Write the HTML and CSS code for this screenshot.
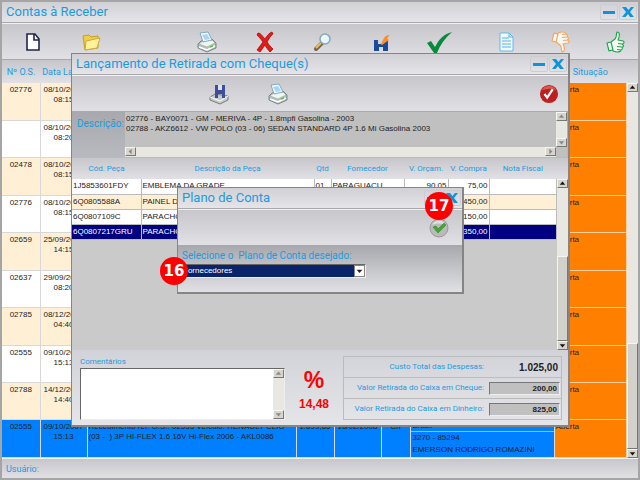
FILE: index.html
```html
<!DOCTYPE html>
<html lang="pt-BR">
<head>
<meta charset="utf-8">
<title>Contas à Receber</title>
<link rel="stylesheet" href="styles.css">
</head>
<body>
<svg class="defs" aria-hidden="true">
  <symbol id="min" viewBox="0 0 16 14"><path d="M2 6h12v3H2z" fill="#0f93dc"/></symbol>
  <symbol id="close" viewBox="0 0 16 14"><path d="M2 2h4l2.500 3L11 2h3l-4 5 4 5h-4L8 9l-2.500 3H2l4-5z" fill="#0f93dc"/></symbol>
  <symbol id="printer" viewBox="0 0 20 22">
    <path d="M1 13 4 10l11-2 4 4v5l-9 4-9-4z" fill="#b4c0c2" stroke="#66736f" stroke-width=".8"/>
    <path d="m2 13 4-3 9-1 3 3-8 4z" fill="#f0f6ee" stroke="#96a29f" stroke-width=".6"/>
    <path d="M3 2 11 1l4 8-9 2z" fill="#eef8ff" stroke="#6c9bb8" stroke-width=".8"/>
    <path d="m5 4 5-1 3 5-5 1z" fill="#a8d5f0"/>
    <path d="m2 16 8 3 8-4" fill="none" stroke="#fff" stroke-width="1.500"/>
    <path d="m13 16 3-1" stroke="#6fb84e" stroke-width="1.500"/>
  </symbol>
  <symbol id="thumb" viewBox="0 0 20 22">
    <path d="M9 8C11 6 10 3 11 1c3 0 3 4 1 8l5 1c2 1 1 3-1 3 2 1 2 3 0 3 1 1 0 3-1 3 0 2-2 2-4 2-3 0-4-1-5-2l-3 1-2-8 4-1zM5 11l2 8M12 12.500l4 .5M11 15.500l5 .5M11 18.500l4 .5" fill="#f4f8f2" stroke="currentColor" stroke-width="1.100" stroke-linejoin="round"/>
  </symbol>
  <symbol id="up" viewBox="0 0 11 9"><path d="M2 6h7L5.500 2z" fill="currentColor"/></symbol>
  <symbol id="down" viewBox="0 0 11 9"><path d="M2 3h7L5.500 7z" fill="currentColor"/></symbol>
</svg>

<main class="window main">
  <header class="titlebar">
    <h1>Contas à Receber</h1>
    <button class="ctl" aria-label="Minimizar"><svg><use href="#min"/></svg></button>
    <button class="ctl" aria-label="Fechar"><svg><use href="#close"/></svg></button>
  </header>
  <nav class="toolbar tools" aria-label="Ferramentas">
    <div class="group">
      <button aria-label="Novo"><svg viewBox="0 0 20 22"><path d="M4 3h8l4 5v11H4z" fill="#fff" stroke="#20264d" stroke-width="1.600"/><path d="M11 3v6h5" fill="none" stroke="#20264d" stroke-width="1.600"/></svg></button>
      <button aria-label="Abrir"><svg viewBox="0 0 20 22"><path d="m2 5 6-1 2 2 7-1v12L4 19z" fill="#f0cf46" stroke="#c49d2d"/><path d="m5 10 14-3-3 10L4 19z" fill="#fff29b" stroke="#d0a936"/></svg></button>
      <span class="slot"></span>
      <button aria-label="Imprimir"><svg><use href="#printer"/></svg></button>
      <button aria-label="Excluir"><svg viewBox="0 0 20 22"><path d="M3 2c3 0 5 4 7 6 2-3 4-6 7-7l1 2c-3 2-4 5-6 8 2 3 4 5 6 7l-3 3c-2-2-4-5-5-7-2 2-3 5-5 7l-3-2c2-3 4-5 6-8C6 8 4 6 2 4z" fill="#e31b18" stroke="#b30808" stroke-width=".8"/></svg></button>
      <button aria-label="Localizar"><svg viewBox="0 0 20 22"><path d="m9 12-6 6" stroke="#6e6652" stroke-width="4" stroke-linecap="round"/><path d="m8 12-5 5" stroke="#eec15b" stroke-width="2"/><circle cx="12" cy="8" r="5" fill="#e4f7ff" stroke="#83a8bf" stroke-width="1.500"/><path d="M9 7c1-2 3-2 5-1" fill="none" stroke="#fff" stroke-width="1.500"/></svg></button>
      <button aria-label="Baixar"><svg viewBox="0 0 20 22"><path d="M3 9h4v4h6V9h4v11h-5v-4H8v4H3z" fill="#174c9c"/><path d="m4 9 6 4 3-6c1-2 3-3 6-3-2 1-2 3-3 4l2 1-7 5z" fill="#ff8d29"/></svg></button>
      <button class="wide" aria-label="Confirmar"><svg viewBox="0 0 28 24"><path d="m2 13 4-2 4 6C14 9 19 4 27 2 20 8 15 15 12 23H9z" fill="#078a3d"/></svg></button>
    </div>
    <div class="group states">
      <button aria-label="Relatório"><svg viewBox="0 0 20 22"><path d="M4 2h9l4 4v14H4z" fill="#f4fbff" stroke="#61b9ec"/><path d="M13 2v4h4M6 7h7M6 10h9M6 13h9M6 16h9" fill="none" stroke="#54b1e6"/></svg></button>
      <button class="reject" aria-label="Reprovar"><svg><use href="#thumb"/></svg></button>
      <button class="approve" aria-label="Aprovar"><svg><use href="#thumb"/></svg></button>
    </div>
  </nav>
  <div class="grid-area">
    <table class="receber">
      <colgroup><col class="r1"><col class="r2"><col class="r3"><col class="r4"><col class="r5"><col class="r6"><col class="r7"><col class="r8"></colgroup>
      <thead><tr><th>Nº O.S.</th><th>Data Lanç.</th><th></th><th></th><th></th><th></th><th></th><th>Situação</th></tr></thead>
      <tbody>
        <tr><td>02776</td><td>08/10/2007<br>08:15</td><td></td><td></td><td></td><td></td><td></td><td>Aberta</td></tr>
        <tr><td></td><td>08/10/2007<br>08:20</td><td></td><td></td><td></td><td></td><td></td><td>Aberta</td></tr>
        <tr><td>02478</td><td>08/10/2007<br>08:15</td><td></td><td></td><td></td><td></td><td></td><td>Aberta</td></tr>
        <tr><td>02776</td><td>08/10/2007<br>08:15</td><td></td><td></td><td></td><td></td><td></td><td>Aberta</td></tr>
        <tr><td>02659</td><td>25/09/2007<br>14:15</td><td></td><td></td><td></td><td></td><td></td><td>Aberta</td></tr>
        <tr><td>02637</td><td>29/09/2007<br>08:20</td><td></td><td></td><td></td><td></td><td></td><td>Aberta</td></tr>
        <tr><td>02785</td><td>08/12/2007<br>04:40</td><td></td><td></td><td></td><td></td><td></td><td>Aberta</td></tr>
        <tr><td>02555</td><td>09/10/2007<br>15:13</td><td></td><td></td><td></td><td></td><td></td><td>Aberta</td></tr>
        <tr><td>02788</td><td>14/12/2007<br>14:40</td><td></td><td></td><td></td><td></td><td></td><td>Aberta</td></tr>
        <tr class="current"><td>02555</td><td>09/10/2007<br>15:13</td><td>Recebimento ref. O.S.: 02555 Veículo: RENAULT CLIO<br>(03 -&nbsp; ) 3P HI-FLEX 1.6 16V Hi-Flex 2006 - AKL0086</td><td>1.699,65</td><td>16/02/2008</td><td>Cn</td><td class="bank"><div>Brasil</div><div>3270 - 85294</div><div>EMERSON RODRIGO ROMAZINI</div></td><td>Aberta</td></tr>
      </tbody>
    </table>
    <div class="vbar tall"><button aria-label="Rolar para cima"><svg><use href="#up"/></svg></button><i></i><button aria-label="Rolar para baixo"><svg><use href="#down"/></svg></button></div>
  </div>
  <footer class="status">Usuário:</footer>
</main>

<section class="window cheque" aria-label="Lançamento de Retirada com Cheque(s)">
  <header class="titlebar">
    <h2>Lançamento de Retirada com Cheque(s)</h2>
    <button class="ctl" aria-label="Minimizar"><svg><use href="#min"/></svg></button>
    <button class="ctl" aria-label="Fechar"><svg><use href="#close"/></svg></button>
  </header>
  <div class="toolbar actions">
    <button aria-label="Salvar"><svg viewBox="0 0 20 22"><path d="m1 14 5-3 13 2v4l-8 4-10-4z" fill="#c5cbc9" stroke="#77807f"/><path d="m1 14 10 4 8-5" fill="none" stroke="#fff"/><path d="M6 2h3v5h4V2h3v13h-3v-4H9v4H6z" fill="#3d4f9c"/><path d="M9 2h4v5H9z" fill="#d5e4f3"/></svg></button>
    <button aria-label="Imprimir"><svg><use href="#printer"/></svg></button>
    <button class="ok" aria-label="Confirmar"><svg viewBox="0 0 22 22"><circle cx="11" cy="11" r="10" fill="#bd2020"/><path d="M3 7a9 9 0 0 1 16 0C14 4 8 5 3 7z" fill="#d85a50"/><path d="m6 11 3 4 6-9" fill="none" stroke="#fff" stroke-width="2.500"/></svg></button>
  </div>
  <div class="descricao">
    <label for="desc">Descrição:</label>
    <div class="descbox">
      <textarea id="desc" readonly wrap="off">02776 - BAY0071 - GM - MERIVA - 4P - 1.8mpfi Gasolina - 2003
02788 - AKZ6612 - VW POLO (03 - 06) SEDAN STANDARD 4P 1.6 Mi Gasolina 2003</textarea>
      <div class="vbar dim"><button aria-label="Subir"><svg><use href="#up"/></svg></button><button aria-label="Descer"><svg><use href="#down"/></svg></button></div>
      <div class="hbar dim"><button aria-label="Esquerda"><svg class="left"><use href="#up"/></svg></button><button aria-label="Direita"><svg class="right"><use href="#up"/></svg></button></div>
    </div>
  </div>
  <div class="parts-area">
    <table class="parts">
      <colgroup><col class="p1"><col class="p2"><col class="p3"><col class="p4"><col class="p5"><col class="p6"><col></colgroup>
      <thead><tr><th>Cód. Peça</th><th>Descrição da Peça</th><th>Qtd</th><th>Fornecedor</th><th>V. Orçam.</th><th>V. Compra</th><th>Nota Fiscal</th></tr></thead>
      <tbody>
        <tr><td>1J5853601FDY</td><td>EMBLEMA DA GRADE</td><td>01</td><td>PARAGUACU</td><td>90,05</td><td>75,00</td><td></td></tr>
        <tr><td>6Q0805588A</td><td>PAINEL DIANTEIRO</td><td>01</td><td></td><td></td><td>450,00</td><td></td></tr>
        <tr><td>6Q0807109C</td><td>PARACHOQUE</td><td>01</td><td></td><td></td><td>150,00</td><td></td></tr>
        <tr class="current"><td>6Q0807217GRU</td><td>PARACHOQUE</td><td>01</td><td></td><td></td><td>350,00</td><td></td></tr>
      </tbody>
    </table>
    <div class="vbar mid"><button aria-label="Subir"><svg><use href="#up"/></svg></button><i></i><button aria-label="Descer"><svg><use href="#down"/></svg></button></div>
  </div>
  <div class="bottom">
    <div class="coment">
      <label for="coment">Comentários</label>
      <div class="combox"><textarea id="coment"></textarea>
        <div class="vbar dim"><button aria-label="Subir"><svg><use href="#up"/></svg></button><button aria-label="Descer"><svg><use href="#down"/></svg></button></div>
      </div>
    </div>
    <div class="percent"><b>%</b><strong>14,48</strong></div>
    <div class="totals">
      <div><label for="custo">Custo Total das Despesas:</label><output id="custo">1.025,00</output></div>
      <div><label for="vc">Valor Retirada do Caixa em Cheque:</label><input id="vc" value="200,00"></div>
      <div><label for="vd">Valor Retirada do Caixa em Dinheiro:</label><input id="vd" value="825,00"></div>
    </div>
  </div>
</section>

<section class="window plano" aria-label="Plano de Conta">
  <header class="titlebar">
    <h2>Plano de Conta</h2>
    <button class="ctl" aria-label="Minimizar"><svg><use href="#min"/></svg></button>
    <button class="ctl" aria-label="Fechar"><svg><use href="#close"/></svg></button>
    <span class="badge b17">17</span>
  </header>
  <div class="toolbar"><button class="go" aria-label="Confirmar"><svg viewBox="0 0 20 20"><circle cx="10" cy="10" r="9" fill="#b9babb" stroke="#999"/><path d="M3 7a8 8 0 0 1 14 0C12 5 7 5 3 7z" fill="#dedede"/><path d="m4 9 3-1 2 3 6-6 2 2-8 8z" fill="#43a82f" stroke="#2a7a20" stroke-width=".5"/></svg></button></div>
  <div class="choose">
    <label for="conta">Selecione o&nbsp; Plano de Conta desejado:</label>
    <div class="selwrap"><select id="conta"><option>Fornecedores</option></select><svg class="arrow"><use href="#down"/></svg><span class="badge b16">16</span></div>
  </div>
</section>
</body>
</html>
```
FILE: styles.css
```css
* { box-sizing: border-box; }
body { margin: 0; position: relative; font: 8px/10px "Liberation Sans", sans-serif; color: #222; }
button { border: 0; padding: 0; background: none; display: block; }
svg { display: block; }
h1, h2, label, th, .status { font-family: Roboto, sans-serif; color: #1c9ade; font-weight: 400; }
h1, h2 { margin: 0 auto 0 0; font-size: 13px; line-height: 20px; }
.defs { position: absolute; width: 0; height: 0; }

.window { display: flex; flex-direction: column; border: 1px solid #858585; background: #d6d7da; }
.main { height: 100vh; min-height: 480px; border: 2px solid #a5a5a6; }
.titlebar { display: flex; align-items: center; gap: 1px; height: 21px; padding: 0 1px 0 4px; background: linear-gradient(#d0d0d5, #e5e5e9); border-bottom: 1px solid #a9a9ab; position: relative; flex: none; }
.ctl { width: 18px; height: 16px; border: 1px solid #cccdd3; border-radius: 2px; }
.ctl svg { width: 16px; height: 14px; }
.toolbar { display: flex; align-items: center; height: 37px; background: linear-gradient(#c6c6cb, #e1e1e5); border-top: 1px solid #f1f1f1; border-bottom: 1px solid #a9a9ab; flex: none; }
.toolbar button svg { width: 20px; height: 22px; }
.tools { justify-content: space-between; padding: 0 8px 0 17px; }
.group { display: flex; align-items: center; gap: 30px; }
.states { gap: 27px; }
.tools button, .slot { width: 28px; display: flex; justify-content: center; }
.toolbar .wide svg { width: 28px; height: 24px; }
.reject { color: #f4a45e; transform: scaleY(-1); }
.approve { color: #1aa449; }

table { border-collapse: collapse; table-layout: fixed; }
td { padding: 0; vertical-align: top; }
th { padding: 0; font-size: 9px; }
.grid-area { flex: 1; display: flex; background: #e9e8e4; }
.receber { flex: 1; width: 0; height: 100%; }
.receber .r1 { width: 38px; } .receber .r2 { width: 47px; } .receber .r3 { width: 209px; } .receber .r4 { width: 38px; }
.receber .r5 { width: 47px; } .receber .r6 { width: 29px; } .receber .r7 { width: 144px; }
.receber thead tr { height: 23px; background: linear-gradient(#c6c6cb, #e1e1e5); }
.receber tbody tr { height: 37px; background: #fff; }
.receber tbody tr:nth-child(odd) { background: #fff0d5; }
.receber tbody tr.current { background: #0080ff; }
.receber tbody td { border: 1px solid #d8d8d8; border-left: 0; border-top: 0; padding: 2px 1px; }
.receber td:nth-child(1), .receber td:nth-child(2) { text-align: center; }
.receber td:nth-child(3) { white-space: nowrap; }
.receber td:nth-child(4), .receber td:nth-child(5), .receber td:nth-child(6) { text-align: center; }
.receber tbody td:last-child { background: #ff8000; border-color: #ffd0a0; }
.receber tbody .bank { padding: 0; }
.bank div { height: 12px; line-height: 12px; padding-left: 2px; }
.bank div:first-child { border-bottom: 1px solid #8bc0f4; }
.status { height: 20px; line-height: 20px; padding-left: 4px; font-size: 9px; background: linear-gradient(#c6c6cb, #e1e1e5); border-top: 1px solid #f3f3f3; flex: none; }

.vbar { width: 11px; display: flex; flex-direction: column; justify-content: space-between; background: #e9e7e2; flex: none; }
.vbar button, .hbar button { width: 11px; height: 9px; background: #d8d5ce; border: 1px solid; border-color: #f5f5f5 #777 #777 #f5f5f5; color: #111; flex: none; }
.vbar button svg, .hbar button svg { width: 9px; height: 7px; }
.vbar i { background: #d3d1cb; border: 1px solid; border-color: #f5f5f5 #777 #777 #f5f5f5; }
.vbar.dim button, .hbar.dim button { color: #888; }
.tall { padding-top: 23px; background: linear-gradient(#c6c6cb, #e1e1e5) 0 0 / 100% 23px no-repeat #e9e7e2; }
.tall i { margin-top: auto; height: 106px; }
.left { transform: rotate(-90deg); }
.right { transform: rotate(90deg); }

.cheque { position: absolute; inset: 53px 70px 53px 71px; border-width: 1px 2px 2px 1px; }
.actions { padding: 0 9px 0 137px; gap: 39px; }
.actions .ok { margin-left: auto; }
.descricao { display: flex; height: 46px; background: linear-gradient(#a8a9ae, #b9babf); padding: 0 1px 1px 5px; flex: none; }
.descricao label { width: 48px; font-size: 10px; line-height: 24px; }
.descbox { flex: 1; display: grid; grid-template: 1fr 10px / 1fr 11px; background: #c0c0c0; }
textarea { border: 0; padding: 0; resize: none; overflow: hidden; background: none; font: inherit; color: inherit; display: block; }
.descbox textarea { padding: 2px 1px; white-space: pre; }
.hbar { display: flex; justify-content: space-between; background: #e9e7e2; }
.parts-area { flex: 1; display: flex; background: #cacaca; }
.parts { flex: 1; width: 0; align-self: flex-start; }
.parts .p1 { width: 69px; } .parts .p2 { width: 173px; } .parts .p3 { width: 17px; } .parts .p4 { width: 73px; } .parts .p5 { width: 44px; } .parts .p6 { width: 41px; }
.parts thead tr { height: 21px; background: linear-gradient(#c6c6cb, #e1e1e5); }
.parts th, .coment label, .totals label { font-size: 8px; white-space: nowrap; }
.parts tbody tr { height: 15px; background: #fff; }
.parts tbody tr:nth-child(even) { background: #fff0d5; }
.parts tbody tr.current { background: #000080; color: #fff; }
.parts tbody td { border: 1px solid #bbb; border-left: 0; border-top: 0; padding: 2px 1px; white-space: nowrap; overflow: hidden; }
.parts td:nth-child(5), .parts td:nth-child(6) { text-align: right; }
.mid { padding-top: 21px; background: linear-gradient(#c6c6cb, #e1e1e5) 0 0 / 100% 21px no-repeat #e9e7e2; }
.mid i { margin-top: auto; height: 85px; }
.bottom { display: flex; height: 75px; background: linear-gradient(#d2d3d8, #e5e5e9); padding: 5px 6px 5px 8px; flex: none; }
.coment label { display: block; line-height: 13px; }
.combox { display: flex; width: 205px; height: 52px; background: #fff; border: 1px solid; border-color: #666 #eee #eee #666; }
.combox textarea { flex: 1; width: 0; }
.percent { width: 58px; display: flex; flex-direction: column; align-items: center; color: #f00; padding-top: 12px; }
.percent b { font-size: 23px; line-height: 26px; }
.percent strong { font-size: 12px; line-height: 22px; }
.totals { flex: 1; display: flex; flex-direction: column; border: 1px solid #bbb; margin-top: 1px; }
.totals div { flex: 1; display: flex; align-items: center; justify-content: flex-end; gap: 5px; padding-right: 1px; }
.totals div + div { border-top: 1px solid #bbb; }
.totals output, .totals input { width: 71px; text-align: right; font: bold 8px "Liberation Sans", sans-serif; color: #222; padding: 0 2px; }
.totals output { font-size: 10px; }
.totals input { height: 13px; background: #c0c0c0; border: 1px solid; border-color: #777 #eee #eee #777; }

.plano { position: absolute; top: 187px; left: 177px; width: 287px; border-width: 1px 2px 2px 1px; }
.plano .toolbar { height: 37px; padding-right: 13px; justify-content: flex-end; }
.plano .toolbar .go svg { width: 20px; height: 20px; }
.choose { background: linear-gradient(#a8a9ae, #e1e1e5); height: 46px; padding: 2px 4px; }
.choose label { display: block; font-size: 10px; line-height: 16px; }
.selwrap { position: relative; width: 184px; }
select { appearance: none; display: block; width: 100%; height: 14px; border: 1px solid #eee; border-top-color: #666; border-radius: 0; background: #0a246a; color: #fff; font: inherit; padding: 0; }
.arrow { position: absolute; right: 1px; top: 1px; width: 11px; height: 12px; background: #fff; border: 1px solid #888; }
.badge { position: absolute; width: 28px; height: 28px; border-radius: 50%; background: #f00; color: #fff; font: bold 15px/28px "DejaVu Sans", sans-serif; text-align: center; }
.b17 { right: 9px; top: 4px; }
.b16 { left: -22px; top: -7px; }
```
